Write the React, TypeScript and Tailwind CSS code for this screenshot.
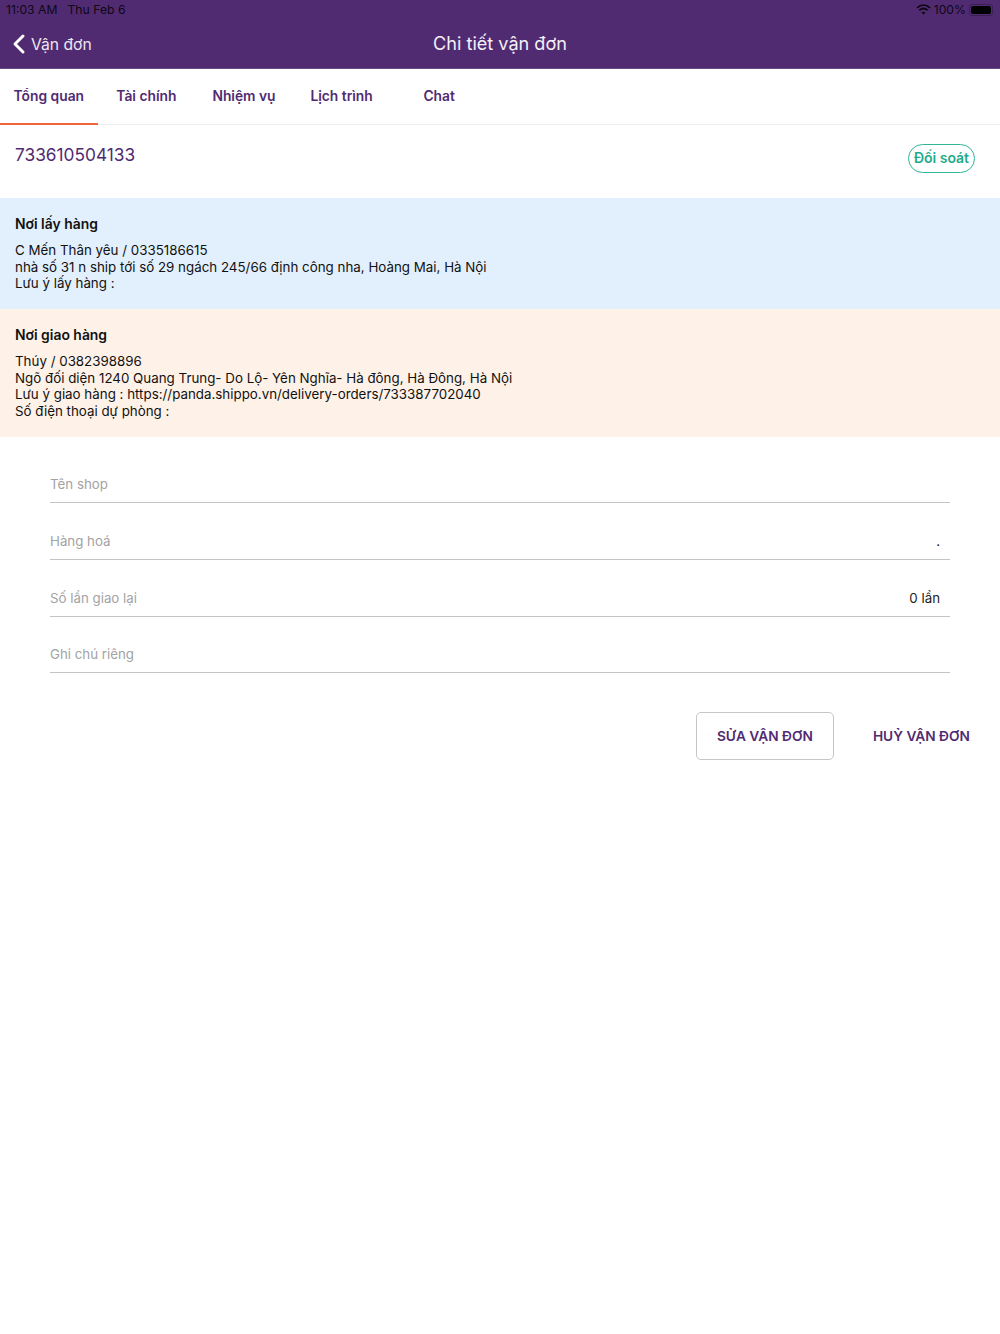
import React from 'react';

const tabs = ['Tổng quan', 'Tài chính', 'Nhiệm vụ', 'Lịch trình', 'Chat'];

const fields = [
  { label: 'Tên shop', value: '' },
  { label: 'Hàng hoá', value: '.' },
  { label: 'Số lần giao lại', value: '0 lần' },
  { label: 'Ghi chú riêng', value: '' },
];

const App: React.FC = () => {
  return (
    <div className="w-[1000px] h-[1334px] bg-white font-['Inter','Noto_Sans',sans-serif] overflow-hidden">
      {/* Header */}
      <div className="h-[69px] bg-[#512b72] border-b border-[#6b4a88]">
        <div className="h-[20px] px-[6px] flex items-center justify-between text-[12.2px] text-[#0d0812]">
          <div className="flex gap-[10px]">
            <span>11:03 AM</span>
            <span>Thu Feb 6</span>
          </div>
          <div className="flex items-center gap-[3px] pr-[1px]">
            <svg width="15" height="11" viewBox="0 0 15 11" fill="none" stroke="#0d0812" strokeWidth="1.8">
              <path d="M1 3.8C5 0.2 10 0.2 14 3.8" />
              <path d="M3.4 6.2C5.8 4.2 9.2 4.2 11.6 6.2" />
              <path d="M7.5 10.6L5.4 8.4C6.6 7.4 8.4 7.4 9.6 8.4Z" fill="#0d0812" stroke="none" />
            </svg>
            <span>100%</span>
            <div className="w-[24px] h-[12px] rounded-[3px] border border-[#3a1f52] p-[1px]">
              <div className="w-full h-full rounded-[2px] bg-black" />
            </div>
          </div>
        </div>
        <div className="relative h-[48px] flex items-center justify-center">
          <div className="absolute left-[11px] top-[12px] flex items-center gap-[5px] text-[15.7px]">
            <svg width="15" height="22" viewBox="0 0 15 22" fill="none" stroke="white" strokeWidth="3" strokeLinecap="round" strokeLinejoin="round">
              <path d="M12 3L4 11L12 19" />
            </svg>
            <span className="text-[#ece6f1] mt-[1px]">Vận đơn</span>
          </div>
          <span className="text-[#f4f0f7] text-[18.1px]">Chi tiết vận đơn</span>
        </div>
      </div>

      {/* Tabs */}
      <div className="h-[56px] flex border-b border-[#ececec]">
        {tabs.map((tab, i) => (
          <div
            key={tab}
            className={`w-[97.6px] h-[56px] pb-[0.5px] flex items-center justify-center text-[13.8px] font-semibold text-[#512b72] ${
              i === 0 ? 'shadow-[inset_0_-2px_0_#f0643c]' : ''
            }`}
          >
            {tab}
          </div>
        ))}
      </div>

      {/* Code and status */}
      <div className="h-[73px] pl-[15px] pr-[25px] flex justify-between">
        <span className="mt-[18px] text-[17.3px] leading-[24px] text-[#512b72]">733610504133</span>
        <span className="mt-[19px] w-[67px] h-[29px] pb-[2px] flex items-center justify-center rounded-full border border-[#2fb597] text-[14px] font-semibold text-[#1fab8c]">
          Đối soát
        </span>
      </div>

      {/* Pickup */}
      <div className="h-[111px] bg-[#e2effc] px-[15px] pt-[18px] text-[13.35px] leading-[16.6px] text-[#111]">
        <div className="font-semibold text-[13.9px]">Nơi lấy hàng</div>
        <div className="mt-[9.5px]">
          <div>C Mến Thân yêu / 0335186615</div>
          <div>nhà số 31 n ship tới số 29 ngách 245/66 định công nha, Hoàng Mai, Hà Nội</div>
          <div>Lưu ý lấy hàng :</div>
        </div>
      </div>

      {/* Delivery */}
      <div className="h-[128px] bg-[#fef1e8] px-[15px] pt-[18px] text-[13.35px] leading-[16.6px] text-[#111]">
        <div className="font-semibold text-[13.9px]">Nơi giao hàng</div>
        <div className="mt-[9.5px]">
          <div>Thúy / 0382398896</div>
          <div>Ngõ đối diện 1240 Quang Trung- Do Lộ- Yên Nghĩa- Hà đông, Hà Đông, Hà Nội</div>
          <div>Lưu ý giao hàng : https://panda.shippo.vn/delivery-orders/733387702040</div>
          <div>Số điện thoại dự phòng :</div>
        </div>
      </div>

      {/* Fields */}
      <div className="mx-[50px] mt-[9px]">
        {fields.map((f) => (
          <div
            key={f.label}
            className="h-[57px] last:h-[56px] flex items-end justify-between pb-[9px] pr-[10px] border-b border-[#c4c4c4] text-[13.3px] leading-[18px]"
          >
            <span className="text-[#a3a3a3]">{f.label}</span>
            <span className="text-[#222]">{f.value}</span>
          </div>
        ))}
      </div>

      {/* Actions */}
      <div className="mt-[39px] pr-[30px] flex justify-end items-center gap-[39px]">
        <button className="w-[138px] h-[48px] pt-[1px] rounded-[5px] border border-[#c6c6c6] text-[13.7px] font-semibold text-[#512b72]">
          SỬA VẬN ĐƠN
        </button>
        <button className="text-[13.7px] font-semibold text-[#512b72]">HUỶ VẬN ĐƠN</button>
      </div>
    </div>
  );
};

export default App;
